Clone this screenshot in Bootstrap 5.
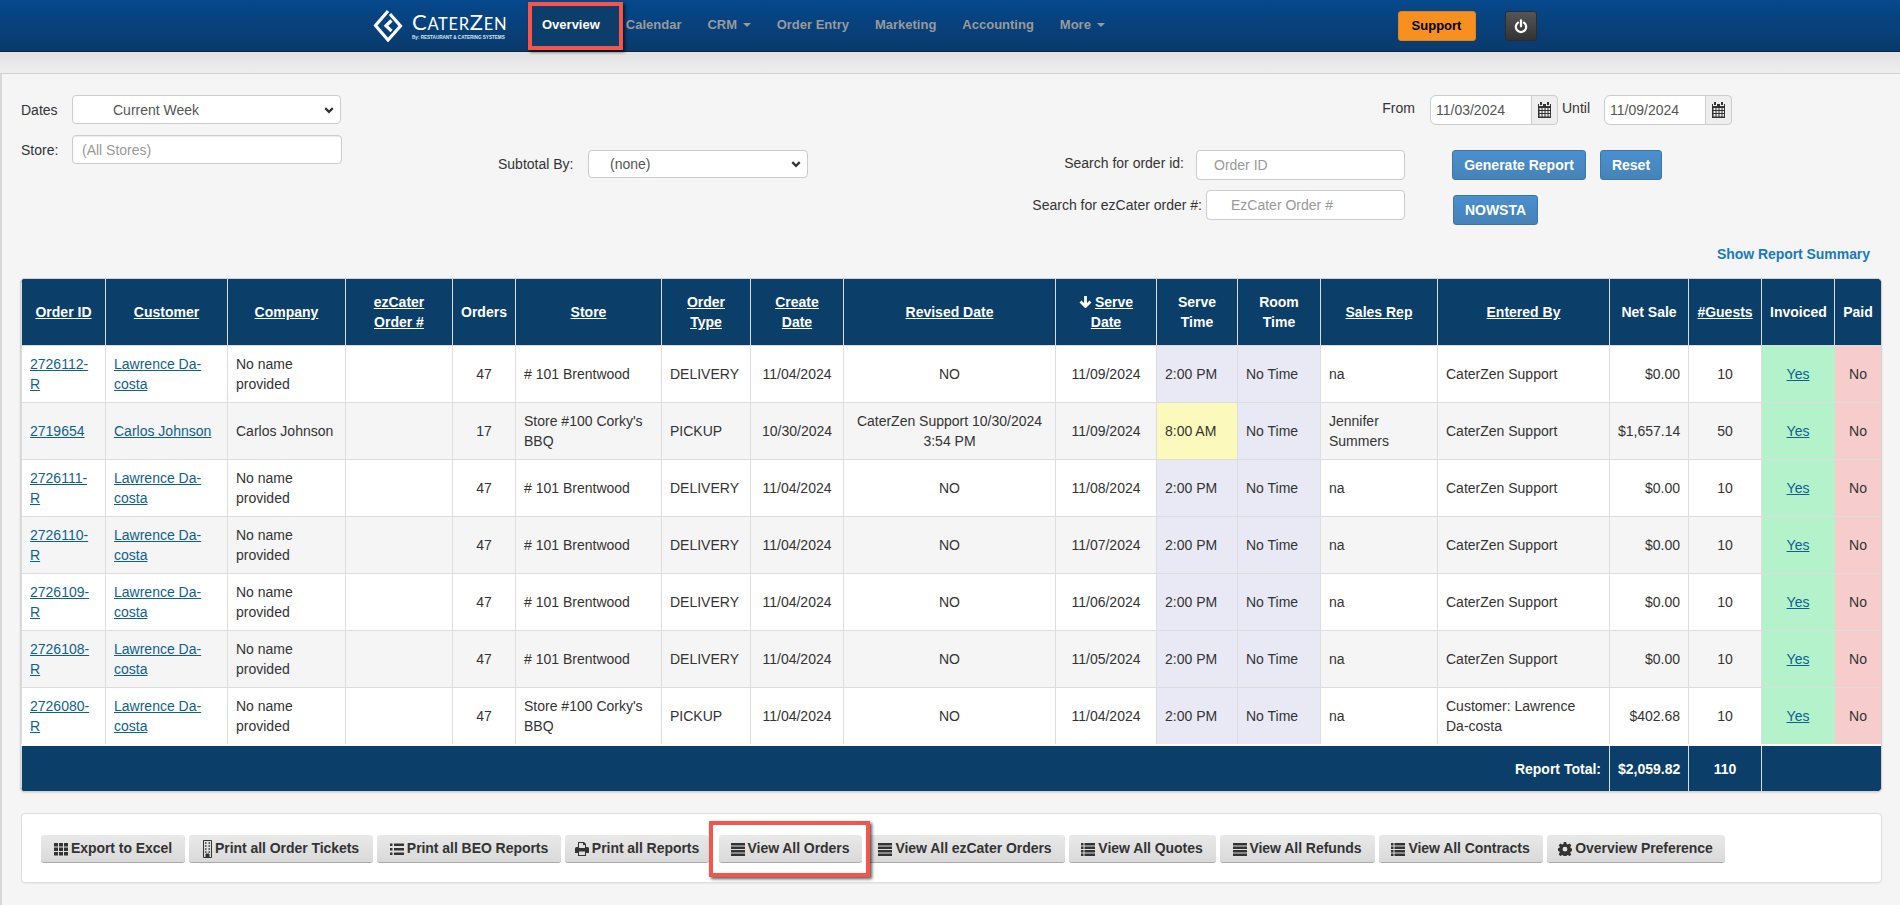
<!DOCTYPE html>
<html lang="en">
<head>
<meta charset="utf-8">
<title>CaterZen Overview</title>
<link rel="stylesheet" href="https://cdn.jsdelivr.net/npm/bootstrap@5.3.0/dist/css/bootstrap.min.css">
<style>
html,body{height:905px;overflow:hidden}
body{font-family:"Liberation Sans",Arial,sans-serif;font-size:14px;line-height:20px;color:#333;background:#f5f5f5}
.cz-top{height:52px;background:linear-gradient(#05488c,#0a3a6b);border-bottom:1px solid #0a2540;padding-left:373px}
.cz-logo{width:135px;height:52px;color:#fff;gap:9px;flex:none}
.cz-logo svg{width:30px;height:33px;flex:none}
.cz-word{font-family:"Lato",sans-serif;font-weight:400;font-size:16.500px;line-height:20px;letter-spacing:.7px;white-space:nowrap}
.cz-word b{font-weight:400;font-size:22px}
.cz-tag{font-size:4.600px;line-height:5px;font-weight:700;white-space:nowrap;color:#dfe7f0;margin-top:1px}
.cz-nav{margin-left:20px;height:52px}
.cz-nav a{display:block;font-size:13px;font-weight:700;color:#9a9a9a;padding:15px 13px;text-decoration:none;white-space:nowrap;line-height:20px}
.cz-nav .cz-caret{display:inline-block;border-top:4px solid #9a9a9a;border-left:4px solid transparent;border-right:4px solid transparent;margin-left:2px;vertical-align:middle}
.cz-active{position:relative;margin-right:-10px}
.cz-nav .cz-active a{background:#0d3e6b;color:#fff;padding:13px 23px 15px 14px;height:48px;margin-top:2px}
.cz-redbox{position:absolute;border:4px solid #f9544c;box-shadow:2px 2px 3px rgba(0,0,0,.65);pointer-events:none;z-index:3}
.cz-active .cz-redbox{left:0;top:2px;width:95px;height:48px}
.btn.cz-support{margin-left:280px;background:#f7901e;border:1px solid #e5831a;color:#000;font-size:13px;font-weight:700;width:78px;height:30px;padding:0;border-radius:3px}
.btn.cz-power{margin-left:29px;background:linear-gradient(#555,#333);border:1px solid #2c2c2c;width:32px;height:30px;padding:0;border-radius:3px}
.cz-band{height:22px;background:linear-gradient(#e2e2e2,#eee);border-bottom:1px solid #d0d0d0}
.cz-main{border-left:2px solid #d8d8d8;height:831px}
.cz-filters{height:170px;padding:21px 0 0 19px}
.cz-left{width:321px;flex:none}
.cz-lbl{white-space:nowrap;margin:0}
.cz-left .cz-lbl{width:51px;flex:none}
.cz-gap-store{margin-top:11px}
.form-select.cz-field,.form-control.cz-field{font-size:14px;line-height:20px;color:#555;border-color:#ccc;border-radius:4px;padding:3px 9px;height:29px;box-shadow:none}
.form-select.cz-field{background-image:url("data:image/svg+xml,%3csvg xmlns='http://www.w3.org/2000/svg' viewBox='0 0 16 16'%3e%3cpath fill='none' stroke='%23333' stroke-width='3.500' d='M2 5l6 6 6-6'/%3e%3c/svg%3e");background-size:10px 10px;background-position:right 6px center;padding-right:20px}
.form-control.cz-field::placeholder{color:#999}
.cz-dates{width:269px;padding-left:40px!important}
.cz-store{width:270px;box-shadow:inset 0 1px 1px rgba(0,0,0,.08)!important}
.cz-mid{margin:55px 0 0 156px;width:310px;flex:none}
.cz-mid .cz-lbl{width:90px;flex:none}
.cz-sub{width:220px;height:28px!important;padding-left:21px!important}
.cz-right{margin-left:224px;width:700px;flex:none}
.cz-from{margin-right:15px;padding-bottom:4px}
.cz-until{margin-left:4px;padding-bottom:4px}
.cz-datebox{width:128px;flex-wrap:nowrap}
.cz-datebox+.cz-until+.cz-datebox{margin-left:14px}
.cz-datebox .form-control{font-size:14px;color:#555;padding:3px 5px;height:30px;border-color:#ccc;min-width:0}
.cz-datebox .input-group-text{padding:0 5px;background:#eee;border-color:#ccc;height:30px;border-radius:0 4px 4px 0}
.cz-datebox svg{width:15px;height:16px}
.cz-row2{margin-top:25px}
.cz-searches{width:373px;flex:none;gap:10px}
.form-control.cz-ord{height:30px;width:209px;padding-left:17px;margin-left:12px}
.form-control.cz-ez{height:30px;width:199px;padding-left:24px;margin-left:4px}
.cz-actions{margin-left:47px}
.btn.cz-blue{background:linear-gradient(#4a90ce,#4682b8);border:1px solid #3f75a5;color:#fff;font-size:14px;font-weight:700;height:30px;padding:0;border-radius:3px;white-space:nowrap}
.btn.cz-now{display:block;width:85px;margin:15px 0 0 1px}
.cz-summary{padding-right:30px;height:20px}
.cz-summary a{color:#1a7abf;font-weight:700;font-size:14px;text-decoration:none;letter-spacing:-.05px}
.cz-tablebox{margin:14px 18px 0 18px;height:514px;border:1px solid #d4d4d4;border-radius:5px;overflow:hidden;box-shadow:0 1px 2px rgba(0,0,0,.12);background:#0b3e69}
.table.cz-table{table-layout:fixed;width:1860px;margin:0;border-collapse:collapse;color:#333;font-size:14px}
.cz-table>thead>tr>th,.cz-table>tfoot>tr>td{background:#0b3e69;color:#fff;font-weight:700;border:1px solid #d8dde2;text-align:center;vertical-align:middle;padding:4px 8px;box-shadow:none}
.cz-table>thead>tr>th{height:66px;border-top:0}
.cz-table>thead>tr>th a{color:#fff}
.cz-table>tfoot>tr>td{height:47px;border-bottom:0;border-top:2px solid #fff}
.cz-table>tbody>tr>td{height:57px;padding:8px;vertical-align:middle;border:1px solid #ddd;background:#fff;box-shadow:none;color:#333}
.cz-table>tbody>tr:nth-child(even)>td{background:#f5f5f5}
.cz-table>tbody>tr>td.cz-c{text-align:center}
.cz-table>tbody>tr>td.cz-r{text-align:right}
.cz-table>tbody>tr>td.cz-lilac,.cz-table>tbody>tr:nth-child(even)>td.cz-lilac{background:#e9e9f5}
.cz-table>tbody>tr>td.cz-yellow,.cz-table>tbody>tr:nth-child(even)>td.cz-yellow{background:#fcf9bd}
.cz-table>tbody>tr>td.cz-green,.cz-table>tbody>tr:nth-child(even)>td.cz-green{background:#b3f2cb;border-color:#ddd #b3f2cb}
.cz-table>tbody>tr>td.cz-pink,.cz-table>tbody>tr:nth-child(even)>td.cz-pink{background:#f6cccc;border-color:#ddd #f6cccc}
.cz-table td a{color:#0f5f8f}
.cz-arrow{width:13px;height:12px;vertical-align:-1px;margin-right:3px}
.cz-panel{margin:21px 18px 0 19px;height:70px;background:#fff;border:1px solid #ddd;border-radius:4px;padding:21px 0 0 19px;box-shadow:0 1px 1px rgba(0,0,0,.05);gap:4px}
.btn.cz-tool{background:linear-gradient(#e9e9e9,#d9d9d9);border:0;border-bottom:1px solid #aaa;color:#333;font-size:14px;font-weight:700;height:28px;padding:0;border-radius:3px;white-space:nowrap;display:inline-flex;align-items:center;justify-content:center;gap:3px;letter-spacing:-.05px}
.cz-tool svg{width:14px;height:14px;flex:none}
.cz-tool .cz-tall{width:9px;height:18px}
.cz-wrapred{position:relative;margin-left:5.500px}
.cz-wrapred .cz-redbox{left:-10px;right:-8px;top:-14px;bottom:-14px}
</style>
</head>
<body>
<header class="cz-top d-flex align-items-center">
  <a class="cz-logo d-flex align-items-center text-decoration-none" href="#">
    <svg viewBox="0 0 30 33" fill="none" stroke="#fff" stroke-width="3.200"><path d="M15 2 L2.500 16.500 L15 31 L27.500 17 L17 5"/><path d="M18.500 11.500 L13 16.800 L18.500 22"/></svg>
    <span class="d-flex flex-column"><span class="cz-word"><b>C</b>ATER<b>Z</b>EN</span><span class="cz-tag">By: RESTAURANT &amp; CATERING SYSTEMS</span></span>
  </a>
  <ul class="cz-nav list-unstyled d-flex mb-0">
    <li class="cz-active"><a href="#">Overview</a><span class="cz-redbox"></span></li>
    <li><a href="#">Calendar</a></li>
    <li><a href="#">CRM <span class="cz-caret"></span></a></li>
    <li><a href="#">Order Entry</a></li>
    <li><a href="#">Marketing</a></li>
    <li><a href="#">Accounting</a></li>
    <li><a href="#">More <span class="cz-caret"></span></a></li>
  </ul>
  <button class="btn cz-support" type="button">Support</button>
  <button class="btn cz-power" type="button" aria-label="Log out"><svg width="14" height="15" viewBox="0 0 14 15" fill="none" stroke="#fff" stroke-width="2.200" stroke-linecap="round"><path d="M4 3.600a5.200 5.200 0 1 0 6 0"/><path d="M7 1.300v6"/></svg></button>
</header>
<div class="cz-band"></div>
<main class="cz-main">
  <form class="cz-filters d-flex">
    <div class="cz-left">
      <div class="d-flex align-items-center">
        <label class="cz-lbl">Dates</label>
        <select class="form-select cz-field cz-dates"><option>Current Week</option></select>
      </div>
      <div class="d-flex align-items-center cz-gap-store">
        <label class="cz-lbl">Store:</label>
        <input class="form-control cz-field cz-store" placeholder="(All Stores)">
      </div>
    </div>
    <div class="cz-mid d-flex align-items-center align-self-start">
      <label class="cz-lbl">Subtotal By:</label>
      <select class="form-select cz-field cz-sub"><option>(none)</option></select>
    </div>
    <div class="cz-right">
      <div class="d-flex justify-content-end align-items-center">
        <label class="cz-lbl cz-from">From</label>
        <div class="input-group cz-datebox">
          <input class="form-control" value="11/03/2024">
          <span class="input-group-text"><svg viewBox="0 0 15 16" fill="#333"><path d="M3 0h2v3H3zM10 0h2v3h-2zM1 2h1v2h4V2h3v2h4V2h1v14H1zM2.500 6v2h2V6zm3 0v2h2V6zm3 0v2h2V6zm3 0v2h1.500V6zm-9 3v2h2V9zm3 0v2h2V9zm3 0v2h2V9zm3 0v2h1.500V9zm-9 3v2.500h2V12zm3 0v2.500h2V12zm3 0v2.500h2V12zm3 0v2.500h1.500V12z" fill-rule="evenodd"/></svg></span>
        </div>
        <label class="cz-lbl cz-until">Until</label>
        <div class="input-group cz-datebox">
          <input class="form-control" value="11/09/2024">
          <span class="input-group-text"><svg viewBox="0 0 15 16" fill="#333"><path d="M3 0h2v3H3zM10 0h2v3h-2zM1 2h1v2h4V2h3v2h4V2h1v14H1zM2.500 6v2h2V6zm3 0v2h2V6zm3 0v2h2V6zm3 0v2h1.500V6zm-9 3v2h2V9zm3 0v2h2V9zm3 0v2h2V9zm3 0v2h1.500V9zm-9 3v2.500h2V12zm3 0v2.500h2V12zm3 0v2.500h2V12zm3 0v2.500h1.500V12z" fill-rule="evenodd"/></svg></span>
        </div>
      </div>
      <div class="d-flex cz-row2">
        <div class="cz-searches d-flex flex-column">
          <div class="d-flex justify-content-end align-items-center"><label class="cz-lbl pb-1">Search for order id:</label><input class="form-control cz-field cz-ord" placeholder="Order ID"></div>
          <div class="d-flex justify-content-end align-items-center"><label class="cz-lbl">Search for ezCater order #:</label><input class="form-control cz-field cz-ez" placeholder="EzCater Order #"></div>
        </div>
        <div class="cz-actions">
          <div class="d-flex gap-3"><button class="btn cz-blue" style="width:134px" type="button">Generate Report</button><button class="btn cz-blue" style="width:62px;margin-left:-2px" type="button">Reset</button></div>
          <button class="btn cz-blue cz-now" type="button">NOWSTA</button>
        </div>
      </div>
    </div>
  </form>
  <div class="cz-summary text-end"><a href="#">Show Report Summary</a></div>
  <div class="cz-tablebox">
    <table class="table cz-table">
      <colgroup><col style="width:84px"><col style="width:122px"><col style="width:118px"><col style="width:107px"><col style="width:63px"><col style="width:146px"><col style="width:89px"><col style="width:93px"><col style="width:212px"><col style="width:101px"><col style="width:81px"><col style="width:83px"><col style="width:117px"><col style="width:172px"><col style="width:79px"><col style="width:73px"><col style="width:73px"><col style="width:47px"></colgroup>
      <thead><tr>
        <th><a href="#">Order ID</a></th><th><a href="#">Customer</a></th><th><a href="#">Company</a></th><th><a href="#">ezCater Order #</a></th><th>Orders</th><th><a href="#">Store</a></th><th><a href="#">Order Type</a></th><th><a href="#">Create Date</a></th><th><a href="#">Revised Date</a></th>
        <th><svg class="cz-arrow" viewBox="0 0 13 12" fill="none" stroke="#fff" stroke-width="2.800"><path d="M6.500 0v10M1.500 5.500l5 5 5-5"/></svg><a href="#">Serve Date</a></th>
        <th>Serve Time</th><th>Room Time</th><th><a href="#">Sales Rep</a></th><th><a href="#">Entered By</a></th><th>Net Sale</th><th><a href="#">#Guests</a></th><th>Invoiced</th><th>Paid</th>
      </tr></thead>
      <tbody>
        <tr><td><a href="#">2726112-R</a></td><td><a href="#">Lawrence Da-costa</a></td><td>No name provided</td><td></td><td class="cz-c">47</td><td># 101 Brentwood</td><td>DELIVERY</td><td class="cz-c">11/04/2024</td><td class="cz-c">NO</td><td class="cz-c">11/09/2024</td><td class="cz-lilac">2:00 PM</td><td class="cz-lilac">No Time</td><td>na</td><td>CaterZen Support</td><td class="cz-r">$0.00</td><td class="cz-c">10</td><td class="cz-c cz-green"><a href="#">Yes</a></td><td class="cz-c cz-pink">No</td></tr>
        <tr><td><a href="#">2719654</a></td><td><a href="#">Carlos Johnson</a></td><td>Carlos Johnson</td><td></td><td class="cz-c">17</td><td>Store #100 Corky's BBQ</td><td>PICKUP</td><td class="cz-c">10/30/2024</td><td class="cz-c">CaterZen Support 10/30/2024 3:54 PM</td><td class="cz-c">11/09/2024</td><td class="cz-yellow">8:00 AM</td><td class="cz-lilac">No Time</td><td>Jennifer Summers</td><td>CaterZen Support</td><td class="cz-r">$1,657.14</td><td class="cz-c">50</td><td class="cz-c cz-green"><a href="#">Yes</a></td><td class="cz-c cz-pink">No</td></tr>
        <tr><td><a href="#">2726111-R</a></td><td><a href="#">Lawrence Da-costa</a></td><td>No name provided</td><td></td><td class="cz-c">47</td><td># 101 Brentwood</td><td>DELIVERY</td><td class="cz-c">11/04/2024</td><td class="cz-c">NO</td><td class="cz-c">11/08/2024</td><td class="cz-lilac">2:00 PM</td><td class="cz-lilac">No Time</td><td>na</td><td>CaterZen Support</td><td class="cz-r">$0.00</td><td class="cz-c">10</td><td class="cz-c cz-green"><a href="#">Yes</a></td><td class="cz-c cz-pink">No</td></tr>
        <tr><td><a href="#">2726110-R</a></td><td><a href="#">Lawrence Da-costa</a></td><td>No name provided</td><td></td><td class="cz-c">47</td><td># 101 Brentwood</td><td>DELIVERY</td><td class="cz-c">11/04/2024</td><td class="cz-c">NO</td><td class="cz-c">11/07/2024</td><td class="cz-lilac">2:00 PM</td><td class="cz-lilac">No Time</td><td>na</td><td>CaterZen Support</td><td class="cz-r">$0.00</td><td class="cz-c">10</td><td class="cz-c cz-green"><a href="#">Yes</a></td><td class="cz-c cz-pink">No</td></tr>
        <tr><td><a href="#">2726109-R</a></td><td><a href="#">Lawrence Da-costa</a></td><td>No name provided</td><td></td><td class="cz-c">47</td><td># 101 Brentwood</td><td>DELIVERY</td><td class="cz-c">11/04/2024</td><td class="cz-c">NO</td><td class="cz-c">11/06/2024</td><td class="cz-lilac">2:00 PM</td><td class="cz-lilac">No Time</td><td>na</td><td>CaterZen Support</td><td class="cz-r">$0.00</td><td class="cz-c">10</td><td class="cz-c cz-green"><a href="#">Yes</a></td><td class="cz-c cz-pink">No</td></tr>
        <tr><td><a href="#">2726108-R</a></td><td><a href="#">Lawrence Da-costa</a></td><td>No name provided</td><td></td><td class="cz-c">47</td><td># 101 Brentwood</td><td>DELIVERY</td><td class="cz-c">11/04/2024</td><td class="cz-c">NO</td><td class="cz-c">11/05/2024</td><td class="cz-lilac">2:00 PM</td><td class="cz-lilac">No Time</td><td>na</td><td>CaterZen Support</td><td class="cz-r">$0.00</td><td class="cz-c">10</td><td class="cz-c cz-green"><a href="#">Yes</a></td><td class="cz-c cz-pink">No</td></tr>
        <tr><td><a href="#">2726080-R</a></td><td><a href="#">Lawrence Da-costa</a></td><td>No name provided</td><td></td><td class="cz-c">47</td><td>Store #100 Corky's BBQ</td><td>PICKUP</td><td class="cz-c">11/04/2024</td><td class="cz-c">NO</td><td class="cz-c">11/04/2024</td><td class="cz-lilac">2:00 PM</td><td class="cz-lilac">No Time</td><td>na</td><td>Customer: Lawrence Da-costa</td><td class="cz-r">$402.68</td><td class="cz-c">10</td><td class="cz-c cz-green"><a href="#">Yes</a></td><td class="cz-c cz-pink">No</td></tr>
      </tbody>
      <tfoot><tr><td colspan="14" class="text-end">Report Total:</td><td class="text-end">$2,059.82</td><td>110</td><td colspan="2"></td></tr></tfoot>
    </table>
  </div>
  <div class="cz-panel d-flex align-items-start">
    <button class="btn cz-tool" style="width:144px" type="button"><svg viewBox="0 0 14 14" fill="#333"><path d="M0 1h4v3.500H0zM5 1h4v3.500H5zM10 1h4v3.500h-4zM0 5.500h4V9H0zM5 5.500h4V9H5zM10 5.500h4V9h-4zM0 10h4v3.500H0zM5 10h4v3.500H5zM10 10h4v3.500h-4z"/></svg>Export to Excel</button>
    <button class="btn cz-tool" style="width:184px" type="button"><svg class="cz-tall" viewBox="0 0 9 18" fill="none" stroke="#333"><path d="M.500.500h8v17h-8z"/><path d="M2 3h1.500M5.500 3H7M2 6h1.500M5.500 6H7M2 9h1.500M5.500 9H7M2 12h1.500M5.500 12H7" stroke-width="1.500"/><path d="M3 17v-3h3v3" fill="#333"/></svg>Print all Order Tickets</button>
    <button class="btn cz-tool" style="width:184px" type="button"><svg viewBox="0 0 14 14" fill="#333"><path d="M0 1.500h2.500V4H0zM4 1.500h10V4H4zM0 6h2.500v2.500H0zM4 6h10v2.500H4zM0 10.500h2.500V13H0zM4 10.500h10V13H4z"/></svg>Print all BEO Reports</button>
    <button class="btn cz-tool" style="width:144px" type="button"><svg viewBox="0 0 14 14"><path fill="#333" fill-rule="evenodd" d="M3 0h6l2 2v3h1.500A1.500 1.500 0 0 1 14 6.500V11h-3v3H3v-3H0V6.500A1.500 1.500 0 0 1 1.500 5H3zm1 1v5h6V3H8V1zM4 9.500V13h6V9.500z"/></svg>Print all Reports</button>
    <div class="cz-wrapred">
      <button class="btn cz-tool d-flex" style="width:143px" type="button"><svg viewBox="0 0 14 14" fill="#333"><path d="M0 1h14v2.400H0zM0 4.500h14v2.400H0zM0 8h14v2.400H0zM0 11.500h14v2.400H0z"/></svg>View All Orders</button>
      <span class="cz-redbox"></span>
    </div>
    <button class="btn cz-tool" style="width:199px" type="button"><svg viewBox="0 0 14 14" fill="#333"><path d="M0 1h14v2.400H0zM0 4.500h14v2.400H0zM0 8h14v2.400H0zM0 11.500h14v2.400H0z"/></svg>View All ezCater Orders</button>
    <button class="btn cz-tool" style="width:147px" type="button"><svg viewBox="0 0 14 14" fill="#333"><path d="M0 1h2.500v2.500H0zM3.500 1H14v2.500H3.500zM0 4.500h2.500V7H0zM3.500 4.500H14V7H3.500zM0 8h2.500v2.500H0zM3.500 8H14v2.500H3.500zM0 11.500h2.500V14H0zM3.500 11.500H14V14H3.500z"/></svg>View All Quotes</button>
    <button class="btn cz-tool" style="width:155px" type="button"><svg viewBox="0 0 14 14" fill="#333"><path d="M0 1h14v2.400H0zM0 4.500h14v2.400H0zM0 8h14v2.400H0zM0 11.500h14v2.400H0z"/></svg>View All Refunds</button>
    <button class="btn cz-tool" style="width:164px" type="button"><svg viewBox="0 0 14 14" fill="#333"><path d="M0 1h2.500v2.500H0zM3.500 1H14v2.500H3.500zM0 4.500h2.500V7H0zM3.500 4.500H14V7H3.500zM0 8h2.500v2.500H0zM3.500 8H14v2.500H3.500zM0 11.500h2.500V14H0zM3.500 11.500H14V14H3.500z"/></svg>View All Contracts</button>
    <button class="btn cz-tool" style="width:178px" type="button"><svg viewBox="0 0 14 14"><path fill="#333" fill-rule="evenodd" d="M5.800 0h2.400l.4 2 1.300.6 1.800-1.100 1.600 1.700-1.100 1.700.6 1.300 2 .4v2.400l-2 .4-.6 1.300 1.100 1.700-1.600 1.700-1.800-1.100-1.300.6-.4 2H5.800l-.4-2-1.300-.6-1.800 1.100L.7 12.300l1.100-1.700-.6-1.300-2-.4V6.500l2-.4.6-1.300L.7 3.200l1.600-1.700 1.800 1.100 1.300-.6zM7 4.800a2.400 2.400 0 1 0 0 4.800 2.400 2.400 0 0 0 0-4.800z"/></svg>Overview Preference</button>
  </div>
</main>
<script src="https://cdn.jsdelivr.net/npm/bootstrap@5.3.0/dist/js/bootstrap.bundle.min.js"></script>
</body>
</html>
